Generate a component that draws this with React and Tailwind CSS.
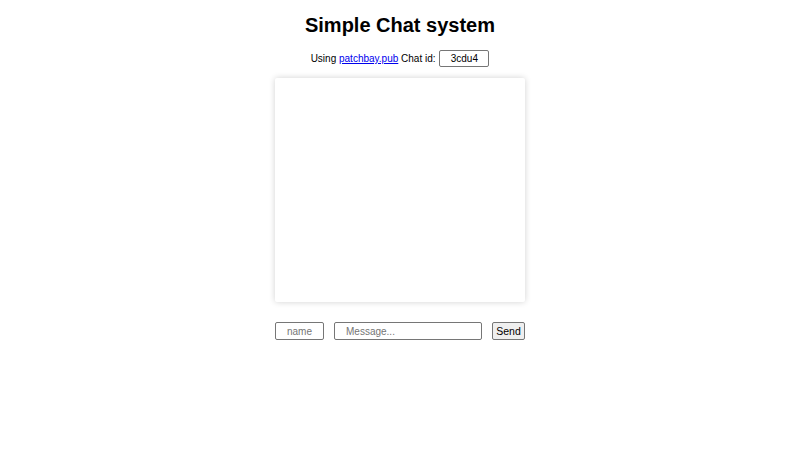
export default function App() {
  return (
    <div className="flex min-h-[450px] w-full flex-col items-center bg-white font-['Liberation_Sans',Arial,sans-serif] text-black">
      <h1 className="mt-[14px] text-[20px] leading-[23px] font-bold">Simple Chat system</h1>

      <div className="mt-[13px] flex h-[17px] items-center text-[10px]">
        <span>Using&nbsp;</span>
        <a href="#" className="text-[#0000ee] underline">patchbay.pub</a>
        <span>&nbsp;Chat id:&nbsp;</span>
        <input
          defaultValue="3cdu4"
          className="ml-[1px] h-[17px] w-[50px] rounded-[2px] border border-[#767676] text-center text-[10px] outline-none"
        />
      </div>

      <div className="mt-[11px] h-[224px] w-[250px] rounded-[2px] bg-white shadow-[0_0_6px_rgba(0,0,0,0.18)]"></div>

      <div className="mt-[20px] flex h-[18px] items-center gap-[10px] text-[10px]">
        <input
          placeholder="name"
          className="h-[18px] w-[49px] rounded-[2px] border border-[#767676] text-center text-[10px] outline-none placeholder:text-[#757575]"
        />
        <input
          placeholder="Message..."
          className="h-[18px] w-[148px] rounded-[2px] border border-[#767676] pl-[11px] text-[10px] outline-none placeholder:text-[#757575]"
        />
        <button className="h-[18px] w-[33px] rounded-[2px] border border-[#767676] bg-[#efefef] text-[10.5px] leading-none text-black">
          Send
        </button>
      </div>
    </div>
  );
}
